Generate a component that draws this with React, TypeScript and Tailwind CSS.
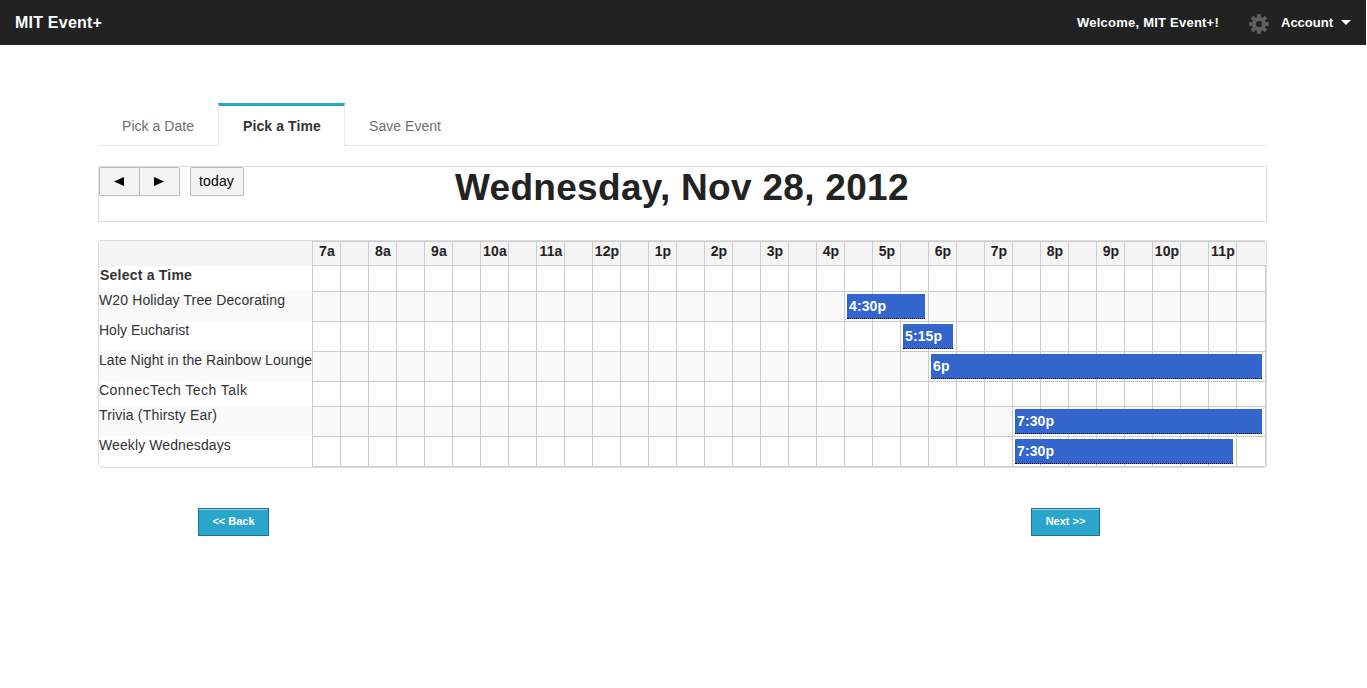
import React from "react";

const FONT = "font-['Liberation_Sans',Arial,sans-serif]";

const hours = ["7a", "8a", "9a", "10a", "11a", "12p", "1p", "2p", "3p", "4p", "5p", "6p", "7p", "8p", "9p", "10p", "11p"];
const slots = Array.from({ length: 34 }, (_, i) => (i % 2 === 0 ? hours[i / 2] : ""));

type Row = {
  label: string;
  tracking: string;
  labelHeight: string;
  rowHeight: string;
  striped?: boolean;
  bold?: boolean;
  event?: { text: string; left: number; width: number };
};

const rows: Row[] = [
  { label: "Select a Time", tracking: "tracking-[0.22px]", labelHeight: "h-[25px]", rowHeight: "h-[26px]", bold: true },
  { label: "W20 Holiday Tree Decorating", tracking: "tracking-[0.12px]", labelHeight: "h-[30px]", rowHeight: "h-[30px]", striped: true, event: { text: "4:30p", left: 535, width: 78 } },
  { label: "Holy Eucharist", tracking: "tracking-normal", labelHeight: "h-[30px]", rowHeight: "h-[30px]", event: { text: "5:15p", left: 591, width: 50 } },
  { label: "Late Night in the Rainbow Lounge", tracking: "tracking-[0.07px]", labelHeight: "h-[30px]", rowHeight: "h-[30px]", striped: true, event: { text: "6p", left: 619, width: 331 } },
  { label: "ConnecTech Tech Talk", tracking: "tracking-[0.45px]", labelHeight: "h-[25px]", rowHeight: "h-[25px]" },
  { label: "Trivia (Thirsty Ear)", tracking: "tracking-[0.18px]", labelHeight: "h-[30px]", rowHeight: "h-[30px]", striped: true, event: { text: "7:30p", left: 703, width: 247 } },
  { label: "Weekly Wednesdays", tracking: "tracking-[0.1px]", labelHeight: "h-[31px]", rowHeight: "h-[30px]", event: { text: "7:30p", left: 703, width: 218 } },
];

function Gear() {
  return (
    <svg width="20" height="20" viewBox="-10 -10 20 20" fill="#606060" className="block">
      <mask id="hub" maskUnits="userSpaceOnUse" x="-10" y="-10" width="20" height="20">
        <rect x="-10" y="-10" width="20" height="20" fill="white" />
        <circle r="3.1" fill="black" />
      </mask>
      <g mask="url(#hub)">
        <circle r="7" />
        {[0, 45, 90, 135].map((a) => (
          <rect key={a} x="-1.9" y="-9.8" width="3.8" height="19.6" transform={`rotate(${a})`} />
        ))}
      </g>
    </svg>
  );
}

function TopBar() {
  return (
    <header className="flex h-[45px] w-[1366px] items-center bg-[#222] pl-[15px] pr-[15px] font-bold text-white">
      <h1 className="text-[16px] leading-[45px] tracking-[0.22px]">MIT Event+</h1>
      <span className="ml-auto text-[13px] leading-[45px] tracking-[0.23px]">Welcome, MIT Event+!</span>
      <div className="ml-[30px] mt-[3px]">
        <Gear />
      </div>
      <span className="ml-[12px] text-[13px] leading-[45px]">Account</span>
      <svg width="10" height="5" viewBox="0 0 10 5" className="ml-[8px]" fill="white">
        <path d="M0 0H10L5 5Z" />
      </svg>
    </header>
  );
}

function Tabs() {
  return (
    <nav className="flex h-[43px] w-[1170px] text-[14px] leading-[46px] text-[#6f6f6f]">
      <a className="w-[120px] border-b border-[#e6e6e6] pl-6 tracking-[0.04px]">Pick a Date</a>
      <a className="w-[127px] border-x border-t-[3px] border-x-[#e6e6e6] border-t-[#2ba6cb] pl-6 font-bold leading-[40px] tracking-[0.1px] text-[#333]">
        Pick a Time
      </a>
      <a className="flex-1 border-b border-[#e6e6e6] pl-6 tracking-[0.04px]">Save Event</a>
    </nav>
  );
}

function Toolbar() {
  const button = "h-[29px] border border-[#bbb] bg-[#f3f3f3] text-center text-[14px] leading-[27px] text-black";
  return (
    <div className="mt-5 flex h-[56px] w-[1169px] border border-[#ddd]">
      <button className={`${button} flex w-[41px] items-center justify-center rounded-l-[2px] pr-[2px]`}>
        <svg width="10" height="9" viewBox="0 0 10 9"><path d="M10 0V9L0 4.5Z" /></svg>
      </button>
      <button className={`${button} flex w-[40px] items-center justify-center rounded-r-[2px] border-l-0 pr-[2px]`}>
        <svg width="10" height="9" viewBox="0 0 10 9"><path d="M0 0V9L10 4.5Z" /></svg>
      </button>
      <button className={`${button} ml-[10px] w-[54px] rounded-[2px] pr-px tracking-[0.12px]`}>today</button>
      <h2 className="ml-[211px] text-[37px] font-bold leading-[41px] tracking-[0.3px] whitespace-nowrap text-[#222]">Wednesday, Nov 28, 2012</h2>
    </div>
  );
}

function Schedule() {
  return (
    <div className="mt-[18px] flex h-[228px] w-[1169px] overflow-hidden rounded-[3px] border border-[#ddd] bg-white text-[14px]">
      <div className="w-[213px] text-[#333]">
        <div className="h-[25px] bg-[#f4f4f4]" />
        {rows.map((row) => (
          <div
            key={row.label}
            className={`${row.labelHeight} ${row.tracking} whitespace-nowrap leading-[18px] ${row.striped ? "bg-[#f9f9f9]" : "bg-white"} ${row.bold ? "pl-px font-bold" : ""}`}
          >
            {row.label}
          </div>
        ))}
      </div>
      <div className="w-[954px] border-b border-l border-[#ccc]">
        <div className="flex h-[24px] border-t border-[#ccc] bg-[#f4f4f4] font-bold leading-[18px] text-[#222]">
          {slots.map((text, i) => (
            <div
              key={i}
              className={i === 33 ? "flex-1" : "w-[28px] border-r border-[#ccc] pl-px text-center tracking-[0.15px] whitespace-nowrap"}
            >
              {text}
            </div>
          ))}
        </div>
        {rows.map((row) => (
          <div
            key={row.label}
            className={`relative flex ${row.rowHeight} border-t border-[#ccc] ${row.striped ? "bg-[#f9f9f9]" : "bg-white"}`}
          >
            {slots.map((_, i) => (
              <div key={i} className={`${i === 33 ? "w-[29px]" : "w-[28px]"} border-r border-[#ccc]`} />
            ))}
            {row.event && (
              <div
                className="absolute top-[2px] h-[25px] rounded-tl-[1px] border-b border-dotted border-black bg-[#36c] pl-[2px] font-bold leading-[25px] tracking-[0.1px] text-white"
                style={{ left: row.event.left - 1, width: row.event.width }}
              >
                {row.event.text}
              </div>
            )}
          </div>
        ))}
      </div>
    </div>
  );
}

function NavButton({ children, className }: { children: React.ReactNode; className: string }) {
  return (
    <button
      className={`h-[28px] border border-[#1e728c] bg-[#2ba6cb] pb-[2px] text-center text-[11px] font-bold leading-[24px] text-white shadow-[inset_0_1px_0_rgba(255,255,255,0.5)] ${className}`}
    >
      {children}
    </button>
  );
}

export default function App() {
  return (
    <div className={`min-h-[688px] bg-white ${FONT}`}>
      <TopBar />
      <main className="pl-[98px] pt-[58px]">
        <Tabs />
        <Toolbar />
        <Schedule />
        <div className="mt-[40px] flex w-[1002px] justify-between pl-[100px]">
          <NavButton className="w-[71px]">&lt;&lt; Back</NavButton>
          <NavButton className="w-[69px]">Next &gt;&gt;</NavButton>
        </div>
      </main>
    </div>
  );
}
